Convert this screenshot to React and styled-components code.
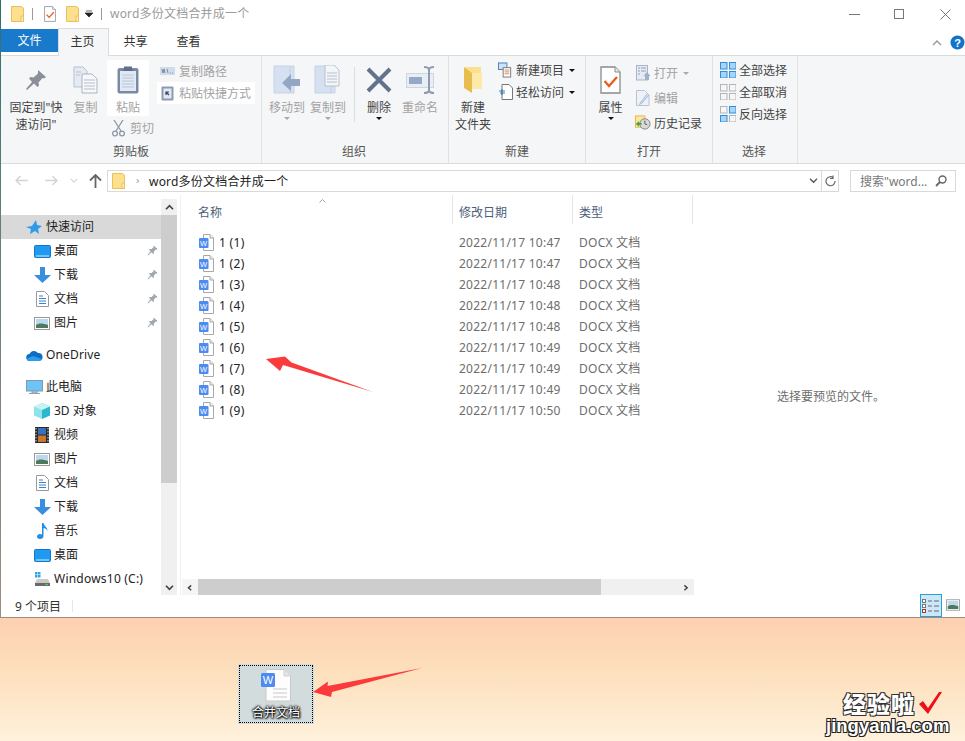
import React from "react";
import styled, { createGlobalStyle } from "styled-components";

const Global = createGlobalStyle`
  html, body { margin: 0; padding: 0; background: #fff; }
  body { font-family: "Noto Sans", "Noto Sans CJK SC", sans-serif; font-size: 12px; color: #222; }
  * { box-sizing: border-box; }
`;

const Page = styled.div`
  position: relative; width: 965px; height: 741px; overflow: hidden;
  display: flex; flex-direction: column;
`;
const Window = styled.div`
  height: 618px; padding-left: 1px; padding-bottom: 1px;
  background: linear-gradient(#2f6f70, #5e7f7c 35%, #a08c80);
  display: flex; flex-direction: column;
`;
const Inner = styled.div`flex: 1; background: #fff; display: flex; flex-direction: column; min-height: 0;`;

const TitleBar = styled.div`height: 28px; display: flex; align-items: center; padding-left: 10px; flex: none;`;
const Bar = styled.span`width: 1px; height: 12px; background: #9a9a9a; margin: ${p => p.$m};`;
const TitleText = styled.span`color: #9b9b9b; line-height: 28px; margin-left: 8px; white-space: nowrap; letter-spacing: .2px;`;
const Spacer = styled.span`width: ${p => p.$w}px; flex: none;`;
const WinControls = styled.div`margin-left: auto; display: flex; align-items: center; padding-right: 14px;`;
const WinBtn = styled.svg`margin-left: ${p => p.$ml || 0}px; display: block;`;

const TabRow = styled.div`height: 28px; display: flex; flex: none; position: relative; border-bottom: 1px solid #dadbdc; align-items: flex-end;`;
const FileTab = styled.div`width: 57px; height: 23px; margin-bottom: 3px; background: #1979ca; color: #fff; text-align: center; line-height: 23px;`;
const ActiveTab = styled.div`width: 51px; height: 28px; margin-bottom: -1px; background: #f5f6f7; border: 1px solid #dadbdc; border-bottom: 0; text-align: center; line-height: 25px; color: #333; padding-right: 2px;`;
const Tab = styled.div`width: ${p => p.$w}px; height: 24px; line-height: 25px; text-align: center; color: #333; margin-bottom: 2px; padding-right: 2px;`;
const TabRight = styled.div`margin-left: auto; height: 27px; display: flex; align-items: center; gap: 8px; padding-top: 2px;`;

const Ribbon = styled.div`height: 108px; flex: none; background: #f5f6f7; border-bottom: 1px solid #dadbdc; display: flex;`;
const Group = styled.div`
  width: ${p => p.$w}px; height: 107px; border-right: 1px solid #e0e1e2; flex: none;
  display: flex; flex-direction: column;
`;
const GroupBody = styled.div`flex: 1; display: flex; padding: 4px 0 0 ${p => p.$pl}px; min-height: 0;`;
const GroupLabel = styled.div`height: 22px; line-height: 21px; text-align: center; color: #555; padding-right: ${p => p.$pr || 0}px;`;

const BigBtn = styled.div`
  width: ${p => p.$w}px; flex: none; display: flex; flex-direction: column; align-items: center;
  color: ${p => (p.$off ? "#a3a3a3" : "#444")}; line-height: 17px; text-align: center; white-space: nowrap;
  height: ${p => (p.$box ? "56px" : "auto")}; background: ${p => (p.$box ? "#fff" : "transparent")};
`;
const BigIcon = styled.div`height: 39px; display: flex; align-items: center; justify-content: center;`;
const Caret = styled.span`
  width: 0; height: 0; margin-top: 1px; margin-left: ${p => p.$ml || 0}px;
  border: 3px solid transparent; border-bottom: 0; border-top: 3px solid ${p => p.$c || "#111"};
`;
const PasteCol = styled.div`width: 50px; flex: none; display: flex; flex-direction: column;`;
const CutRow = styled.div`display: flex; align-items: center; gap: 5px; padding: 3px 0 0 5px; color: #a3a3a3;`;
const Stack = styled.div`display: flex; flex-direction: column; margin-left: ${p => p.$ml || 0}px; margin-top: ${p => p.$mt || 0}px;`;
const Small = styled.div`
  height: ${p => p.$h || 22}px; display: flex; align-items: center; gap: ${p => p.$gap || 4}px;
  padding: 0 4px 0 ${p => p.$pl || 0}px; white-space: nowrap;
  color: ${p => (p.$off ? "#a3a3a3" : "#444")};
  background: ${p => (p.$hl ? "#fff" : "transparent")};
`;
const IconSlot = styled.span`width: ${p => p.$w}px; display: flex; justify-content: center; flex: none;`;
const Sep = styled.div`width: 1px; height: 55px; background: #dcdddf; margin: 7px 4px 0 6px; flex: none;`;

const AddressRow = styled.div`height: 31px; flex: none; display: flex; align-items: center; padding-top: 2px;`;
const NavButtons = styled.div`width: 106px; flex: none; display: flex; align-items: center; padding-left: 13px;`;
const NavSlot = styled.span`width: ${p => p.$w}px; display: flex; justify-content: center; flex: none;`;
const Field = styled.div`
  height: 22px; border: 1px solid #d9d9d9; display: flex; align-items: center; flex: none;
  width: ${p => p.$w}px; margin-left: ${p => p.$ml || 0}px;
`;
const Crumb = styled.span`margin-left: 8px; color: #222; white-space: nowrap; letter-spacing: .2px;`;
const FieldEnd = styled.div`margin-left: auto; display: flex; align-items: center; height: 100%; padding-right: ${p => p.$pr || 0}px;`;
const RefreshBox = styled.span`height: 100%; width: 17px; margin-left: 3px; border-left: 1px solid #d9d9d9; display: flex; align-items: center; justify-content: center;`;
const SearchText = styled.span`margin-left: 9px; color: #777; white-space: nowrap;`;

const Content = styled.div`flex: 1; display: flex; min-height: 0;`;
const NavPane = styled.div`width: 160px; flex: none; padding-top: 20px; overflow: hidden;`;
const NavRow = styled.div`
  height: 24px; display: flex; align-items: center; position: relative;
  padding-left: ${p => p.$indent}px; margin-top: ${p => p.$mt || 0}px;
  background: ${p => (p.$sel ? "#d9d9d9" : "transparent")}; color: #222; white-space: nowrap;
`;
const NavIcon = styled.span`width: 18px; height: 18px; display: flex; align-items: center; justify-content: center; margin-right: 3px; flex: none;`;
const NavText = styled.span`position: relative; top: -1px; letter-spacing: ${p => p.$ls || 0}px;`;
const Pin = styled.span`position: absolute; left: 146px; top: 6px; display: flex;`;

const VScroll = styled.div`width: 16px; flex: none; background: #f0f0f0; display: flex; flex-direction: column; margin-top: 4px;`;
const VArrow = styled.div`height: 16px; display: flex; align-items: center; justify-content: center; flex: none;`;
const VThumb = styled.div`height: 268px; background: #cdcdcd; flex: none;`;
const VSpace = styled.div`flex: 1;`;
const Gutter = styled.div`width: 4px; border-right: 1px solid #f0f0f0; flex: none;`;

const ListPane = styled.div`width: 513px; flex: none; display: flex; flex-direction: column; position: relative;`;
const ListHead = styled.div`height: 37px; display: grid; grid-template-columns: 272px 120px 120px; flex: none;`;
const HeadCell = styled.div`
  height: 29px; padding: 5px 0 0 ${p => p.$pl}px; line-height: 26px; color: #4c607a;
  border-right: 1px solid #e5e5e5;
`;
const SortUp = styled.span`position: absolute; left: 137px; top: 3px; display: flex;`;
const Files = styled.div`flex: 1;`;
const FileRow = styled.div`height: 21px; display: grid; grid-template-columns: 272px 120px 120px; align-items: center;`;
const NameCell = styled.div`padding-left: 18px; display: flex; align-items: center; gap: 5px; color: #222; letter-spacing: .3px;`;
const MetaCell = styled.div`padding: 0 0 1px 6px; color: #6d6d6d; letter-spacing: .25px;`;
const HScroll = styled.div`height: 16px; margin-left: 1px; background: #f0f0f0; display: flex; flex: none;`;
const HArrow = styled.div`width: 16px; background: ${p => (p.$l ? "#f5f5f5" : "transparent")}; display: flex; align-items: center; justify-content: center; flex: none;`;
const HThumb = styled.div`width: 403px; background: #cdcdcd; flex: none;`;
const HSpace = styled.div`flex: 1;`;
const Preview = styled.div`flex: 1; display: flex; align-items: center; justify-content: center; color: #6d6d6d; padding: 2px 0 0 3px;`;

const Status = styled.div`height: 22px; flex: none; display: flex; align-items: center; padding-left: 14px; position: relative; color: #333;`;
const StatusSep = styled.span`width: 1px; height: 12px; background: #e6e6e6; margin-left: 11px;`;
const ViewBtns = styled.div`margin-left: auto; display: flex; align-items: flex-end; height: 100%; padding-right: 5px; gap: 4px;`;
const DetailsBtn = styled.div`width: 22px; height: 23px; background: #cce8f7; border: 1px solid #26a0da; display: flex; align-items: center; justify-content: center;`;
const ThumbBtn = styled.div`height: 22px; display: flex; align-items: center; padding-bottom: 3px;`;

const Desktop = styled.div`flex: 1; position: relative; background: linear-gradient(#fdd0b1, #fde0bd 45%, #fff1dc);`;
const DeskItem = styled.div`
  position: absolute; left: 239px; top: 47px; width: 74px; height: 58px;
  background: #d3dcdc; border: 1px dotted #000; outline: 1px solid #d3dcdc;
  display: flex; flex-direction: column; align-items: center; padding-top: 3px;
`;
const DeskLabel = styled.div`
  color: #fff; line-height: 16px; margin-top: 3px;
  text-shadow: 0 0 2px #000, 0 0 2px #000, 0 0 3px #000, 1px 1px 2px #000;
`;
const Watermark = styled.div`position: absolute; left: 826px; top: 72px; width: 130px;`;
const WmTop = styled.div`
  display: flex; align-items: center; padding-left: 17px; height: 26px;
  font: 900 23px/26px "Noto Sans CJK SC", sans-serif; color: #fff;
  text-shadow: 1px 1px 0 #333, -1px -1px 0 #333, 1px -1px 0 #333, -1px 1px 0 #333;
  letter-spacing: 1px; white-space: nowrap;
`;
const WmBottom = styled.div`
  font: 700 18.5px/20px "Liberation Sans", sans-serif; color: #fff; white-space: nowrap;
  text-shadow: 1px 1px 0 #222, -1px -1px 0 #222, 1px -1px 0 #222, -1px 1px 0 #222, 0 1px 0 #222, 0 -1px 0 #222;
`;
const WmCheck = styled.svg`margin-left: 3px; flex: none;`;
const Overlay = styled.svg`position: absolute; left: 0; top: 0; pointer-events: none;`;

/* ---------- icons ---------- */
const Folder = ({ w = 13, h = 16 }) => (
  <svg width={w} height={h} viewBox="0 0 13 16">
    <path d="M.5.5h9.5l2.5 1.5v13.5H.5z" fill="#fde08d" stroke="#e8c15f" />
    <path d="M10 10h2.5v5.5H10z" fill="#fdeeb8" stroke="#e8c15f" />
  </svg>
);
const CheckDoc = ({ w = 12, h = 16 }) => (
  <svg width={w} height={h} viewBox="0 0 21 28">
    <path d="M1 1h14l5 5v21H1z" fill="#fff" stroke="#8a8a8a" strokeWidth="1.3" />
    <path d="M15 1v5h5" fill="#e8e8e8" stroke="#8a8a8a" />
    <path d="M4.5 15l4.5 5 8-9" fill="none" stroke="#f0561d" strokeWidth="2.2" />
  </svg>
);
const PinIcon = ({ s = 22, c = "#8a9099" }) => (
  <svg width={s} height={s} viewBox="0 0 22 22">
    <path d="M13 1l8 7-2 1.500-1.500-.5-4 4.500.5 3-1.500 1.500-3.500-3.500L2 21l-1-1 6-7-3-3.500L5.500 8l3 .5L13 4.500z" fill={c} />
  </svg>
);
const CopyIcon = () => (
  <svg width="25" height="28" viewBox="0 0 25 28">
    <path d="M1 1h9l4 4v16H1z" fill="#e4ebf4" stroke="#b7c1cd" />
    <path d="M9 8h10l5 5v14H9z" fill="#f6f8fb" stroke="#aab4c0" />
    <path d="M11 14h11M11 17h11M11 20h11M11 23h11M3 6h5M3 9h4" stroke="#b6bfca" />
  </svg>
);
const PasteIcon = () => (
  <svg width="22" height="29" viewBox="0 0 22 29">
    <rect x=".5" y="3" width="21" height="25.500" rx="2" fill="#7a8ba3" />
    <rect x="3" y="6" width="16" height="20" fill="#e3e9f4" />
    <path d="M5 10h12M5 13h12M5 16h12M5 19h12M5 22h12" stroke="#b9c5d8" />
    <path d="M7 4V1.500h8V4l2 2H5z" fill="#5f7088" />
  </svg>
);
const ScissorsIcon = () => (
  <svg width="13" height="17" viewBox="0 0 13 17" fill="none" stroke="#8d99a8" strokeWidth="1.3">
    <path d="M2 0l7 11M11 0L4 11" />
    <circle cx="3" cy="13.500" r="2.400" />
    <circle cx="10" cy="13.500" r="2.400" />
  </svg>
);
const PathIcon = () => (
  <svg width="15" height="8" viewBox="0 0 15 8">
    <rect width="15" height="8" fill="#cfdcec" />
    <path d="M2 2l1 4 1-4 1 4M7 2l1 4M10 6h.8M12 6h.8" stroke="#667788" strokeWidth=".8" fill="none" />
  </svg>
);
const ShortcutIcon = () => (
  <svg width="13" height="16" viewBox="0 0 13 16">
    <rect x=".5" y="1.500" width="12" height="14" rx="1" fill="#8b9bb0" />
    <rect x="2.500" y="3.500" width="8" height="10" fill="#e3e9f4" />
    <path d="M5 10V7h3M5 7l3 3" stroke="#33445a" strokeWidth="1.200" fill="none" />
  </svg>
);
const MoveIcon = ({ copy }) => (
  <svg width="28" height="29" viewBox="0 0 28 29">
    <path d="M1 1h20v27H1z" fill="#d5e0f0" stroke="#c6d3e6" />
    <path d="M17 2v26" stroke="#c0cde0" />
    {copy ? (
      <g>
        <path d="M11 0h9l5 5v16H11z" fill="#f2f5f9" stroke="#b9c2ce" />
        <path d="M13 8h10M13 11h10M13 14h10M13 17h10" stroke="#b9c2ce" />
      </g>
    ) : (
      <path d="M27 14h-9V9l-9 9 9 8v-5h9z" fill="#93a7c4" />
    )}
  </svg>
);
const DeleteIcon = () => (
  <svg width="26" height="26" viewBox="0 0 26 26">
    <path d="M2 2l22 22M24 2L2 24" stroke="#63738d" strokeWidth="4" />
  </svg>
);
const RenameIcon = () => (
  <svg width="29" height="28" viewBox="0 0 29 28">
    <rect x=".5" y="7.500" width="27" height="14" fill="#e9eef6" stroke="#ccd6e3" />
    <rect x="3" y="11" width="13" height="7" fill="#95a9c4" />
    <path d="M18 1c3 0 4.500 1 5 2 .5-1 2-2 5-2M23 3v22M18 27c3 0 4.500-1 5-2 .5 1 2 2 5 2" stroke="#8d9bae" strokeWidth="2" fill="none" />
  </svg>
);
const NewFolderIcon = () => (
  <svg width="20" height="28" viewBox="0 0 20 28">
    <path d="M2 1h16v22H8z" fill="#fbe08f" />
    <path d="M1 1l8 6v20l-8-5z" fill="#e9bc4f" />
    <path d="M9 7h10v16H9z" fill="#fde9a8" />
  </svg>
);
const NewItemIcon = () => (
  <svg width="16" height="16" viewBox="0 0 16 16">
    <rect x=".5" y=".5" width="9" height="7" fill="#cfe3f5" stroke="#3f80c0" />
    <rect x="5.500" y="5.500" width="8" height="10" fill="#fff" stroke="#777" />
    <path d="M7 8h5M7 10h5M7 12h5" stroke="#d0682f" strokeWidth=".8" />
  </svg>
);
const EasyIcon = () => (
  <svg width="14" height="16" viewBox="0 0 14 16">
    <path d="M3 .5h7l3.500 3.500v11.500H3z" fill="#fff" stroke="#777" />
    <path d="M0 7h6M1 9h5M3 5v6" stroke="#2a72b8" strokeWidth=".9" fill="none" />
  </svg>
);
const OpenIcon = () => (
  <svg width="15" height="16" viewBox="0 0 15 16">
    <rect x=".5" y=".5" width="11" height="14.500" fill="#e4ebf4" stroke="#a9b5c4" />
    <path d="M2 3h2M5 3h5M2 6h2M5 6h5M2 9h2" stroke="#92a1b5" />
    <path d="M11 7l3.500 4H13v4h-4v-4H7.500z" fill="#9fb0c7" />
  </svg>
);
const EditIcon = () => (
  <svg width="14" height="16" viewBox="0 0 14 16">
    <path d="M.5.500h8l4.500 4.500v10.500H.5z" fill="#eef2f8" stroke="#b9c4d3" />
    <path d="M11 4l-6 8-1.500 2.500L6 13l7-8" fill="#cddcf0" stroke="#a9c0dc" />
  </svg>
);
const HistoryIcon = () => (
  <svg width="17" height="15" viewBox="0 0 17 15">
    <rect x=".5" y=".5" width="10" height="12" fill="#fce79f" stroke="#e0b94c" />
    <circle cx="10.500" cy="9" r="5.500" fill="#d9d9d9" stroke="#808080" />
    <path d="M10.500 5.500V9l2.500 1" stroke="#555" fill="none" />
    <path d="M1 9l3-3v2h3v2H4v2z" fill="#3da63a" />
  </svg>
);
const Grid4 = ({ on = [true, true, true, true] }) => (
  <svg width="16" height="16" viewBox="0 0 16 16">
    {[[0, 0], [9, 0], [0, 9], [9, 9]].map(([x, y], i) => (
      <rect key={i} x={x + 0.5} y={y + 0.5} width="6.500" height="6.500"
        fill={on[i] ? "#a8d4f8" : "#f5f6f7"} stroke={on[i] ? "#2f8fdc" : "#b5b5b5"} />
    ))}
  </svg>
);
const Arrow = ({ flip, c }) => (
  <svg width="13" height="11" viewBox="0 0 14 12" style={{ transform: flip ? "scaleX(-1)" : "none" }}>
    <path d="M6 1L1 6l5 5M1 6h13" fill="none" stroke={c} strokeWidth="1.600" />
  </svg>
);
const Chevron = ({ d = "M1 6l4-4 4 4", c = "#555", w = 10, h = 8, sw = 1.500 }) => (
  <svg width={w} height={h} viewBox="0 0 10 8"><path d={d} fill="none" stroke={c} strokeWidth={sw} /></svg>
);
const WordFile = () => (
  <svg width="15" height="17" viewBox="0 0 15 17">
    <path d="M4.500.5h6.500l3.500 3.500v12.500H4.500z" fill="#fff" stroke="#a8a8a8" />
    <path d="M11 .5V4h3.500" fill="#eee" stroke="#a8a8a8" />
    <rect x="0" y="4" width="9.500" height="10" rx="1" fill="#4d8bf0" />
    <text x="4.700" y="11.500" fontSize="7.500" fontFamily="Liberation Sans" fill="#fff" textAnchor="middle">W</text>
  </svg>
);
const Monitor = ({ c = "#1e9bf0" }) => (
  <svg width="17" height="13" viewBox="0 0 17 13">
    <rect x=".5" y=".5" width="16" height="12" rx="1" fill={c} stroke="#1279c8" />
    <path d="M2 11h13" stroke="#cfeaff" />
  </svg>
);
const Down = () => (
  <svg width="17" height="16" viewBox="0 0 17 16"><path d="M6 0h5v8h6l-8.500 8L0 8h6z" fill="#3a8ede" /></svg>
);
const Doc = () => (
  <svg width="13" height="16" viewBox="0 0 13 16">
    <path d="M.5.500h8l4 4v11H.5z" fill="#fff" stroke="#9a9a9a" />
    <path d="M3 5h4M3 7.500h7M3 10h7M3 12.500h7" stroke="#3b86c8" />
  </svg>
);
const Picture = ({ w = 16, h = 13 }) => (
  <svg width={w} height={h} viewBox="0 0 16 13">
    <rect x=".5" y=".5" width="15" height="12" fill="#fff" stroke="#9a9a9a" />
    <rect x="2" y="2" width="12" height="9" fill="#bcd8ee" />
    <path d="M2 8c3-2 6-2 12 0v3H2z" fill="#4e7a5c" />
  </svg>
);
const Star = () => (
  <svg width="16" height="15" viewBox="0 0 16 15">
    <path d="M10 0l1 5 5 1-4 3 1 5-4-3-5 3 1-5-5-2 6-1z" fill="#2f9ae8" />
  </svg>
);
const Cloud = () => (
  <svg width="17" height="11" viewBox="0 0 17 11">
    <path d="M4 11a3.500 3.500 0 0 1-.5-7A5 5 0 0 1 12 3a4 4 0 0 1 1 8z" fill="#0f6cc4" />
    <path d="M4 11c-2 0-3-1-3-2.500L7 6l9 3c-.5 1.200-1.500 2-3 2z" fill="#2c9de8" />
  </svg>
);
const PC = () => (
  <svg width="17" height="15" viewBox="0 0 17 15">
    <rect x=".5" y=".5" width="16" height="10.500" fill="#6fc4f6" stroke="#7f9bb3" />
    <path d="M6 11h5v2H6zM3 13.500h11" stroke="#8aa0b3" fill="#b9d0e0" />
  </svg>
);
const Cube = () => (
  <svg width="16" height="16" viewBox="0 0 16 16">
    <path d="M8 0l8 3.500v9L8 16z" fill="#2fb6cf" />
    <path d="M8 0L0 3.500v9L8 16z" fill="#8fe3ea" />
    <path d="M0 3.500L8 7l8-3.500L8 0z" fill="#c7f3f3" />
  </svg>
);
const Film = () => (
  <svg width="14" height="16" viewBox="0 0 14 16">
    <rect width="14" height="16" fill="#2a2a2a" />
    <rect x="3" y="1" width="8" height="6.500" fill="#3573c0" />
    <rect x="3" y="8.500" width="8" height="6.500" fill="#c9762f" />
    <path d="M1 1v14M13 1v14" stroke="#ddd" strokeDasharray="1.500 1.500" />
  </svg>
);
const Music = () => (
  <svg width="11" height="16" viewBox="0 0 11 16">
    <path d="M5 0h1.500c.5 3 4 4 4 8-1-2-2.500-3-4-3v8c0 2-1.500 3-3.500 3S0 15 0 13.500 1.500 11 3 11c.8 0 1.500.2 2 .5z" fill="#1f8fe8" />
  </svg>
);
const Drive = () => (
  <svg width="15" height="14" viewBox="0 0 15 14">
    <rect x="0" y="0" width="2.500" height="2.500" fill="#2fa4e7" /><rect x="3" y="0" width="2.500" height="2.500" fill="#2fa4e7" />
    <rect x="0" y="3" width="2.500" height="2.500" fill="#2fa4e7" /><rect x="3" y="3" width="2.500" height="2.500" fill="#2fa4e7" />
    <path d="M2 7h11l2 4v3H0v-3z" fill="#c9c9c9" />
    <rect x="0" y="11" width="15" height="3" fill="#6a6a6a" /><rect x="10" y="12" width="3" height="1" fill="#55d040" />
  </svg>
);
const BigWord = () => (
  <svg width="30" height="33" viewBox="0 0 30 33">
    <path d="M5 .5h18l6.500 6.500v25H5z" fill="#fdfdfd" stroke="#c8c8c8" />
    <path d="M23 .5V7h6.500" fill="#e5e5e5" stroke="#d0d0d0" />
    <path d="M12 20h14M12 24h14M12 28h14" stroke="#c9c9c9" />
    <rect x="0" y="4" width="14" height="14" rx="1.500" fill="#4d8bf0" />
    <text x="7" y="15" fontSize="11" fontFamily="Liberation Sans" fill="#fff" textAnchor="middle">W</text>
  </svg>
);

const fileRows = [
  ["1 (1)", "2022/11/17 10:47"], ["1 (2)", "2022/11/17 10:47"], ["1 (3)", "2022/11/17 10:48"],
  ["1 (4)", "2022/11/17 10:48"], ["1 (5)", "2022/11/17 10:48"], ["1 (6)", "2022/11/17 10:49"],
  ["1 (7)", "2022/11/17 10:49"], ["1 (8)", "2022/11/17 10:49"], ["1 (9)", "2022/11/17 10:50"],
];
const navRows = [
  { t: "快速访问", i: <Star />, indent: 24, sel: true },
  { t: "桌面", i: <Monitor />, indent: 32, pin: true },
  { t: "下载", i: <Down />, indent: 32, pin: true },
  { t: "文档", i: <Doc />, indent: 32, pin: true },
  { t: "图片", i: <Picture />, indent: 32, pin: true },
  { t: "OneDrive", i: <Cloud />, indent: 24, mt: 8, ls: 0.15 },
  { t: "此电脑", i: <PC />, indent: 24, mt: 8 },
  { t: "3D 对象", i: <Cube />, indent: 32 },
  { t: "视频", i: <Film />, indent: 32 },
  { t: "图片", i: <Picture />, indent: 32 },
  { t: "文档", i: <Doc />, indent: 32 },
  { t: "下载", i: <Down />, indent: 32 },
  { t: "音乐", i: <Music />, indent: 32 },
  { t: "桌面", i: <Monitor />, indent: 32 },
  { t: "Windows10 (C:)", i: <Drive />, indent: 32, ls: 0.22 },
];

export default function App() {
  return (
    <Page>
      <Global />
      <Window>
        <Inner>
          <TitleBar>
            <Folder />
            <Bar $m="0 11px 0 8px" />
            <CheckDoc />
            <Spacer $w={10} />
            <Folder />
            <Spacer $w={6} />
            <svg width="9" height="9" viewBox="0 0 9 9"><path d="M1 1h6M0 3h8L4 7z" stroke="#222" fill="#222" strokeWidth=".7" /></svg>
            <Bar $m="0 0 0 7px" />
            <TitleText>word多份文档合并成一个</TitleText>
            <WinControls>
              <WinBtn width="11" height="11" viewBox="0 0 11 11"><path d="M0 5.500h11" stroke="#777" /></WinBtn>
              <WinBtn $ml={34} width="10" height="10" viewBox="0 0 10 10"><rect x=".5" y=".5" width="9" height="9" fill="none" stroke="#777" /></WinBtn>
              <WinBtn $ml={36} width="11" height="11" viewBox="0 0 11 11"><path d="M.5.5l10 10M10.500.5l-10 10" stroke="#777" /></WinBtn>
            </WinControls>
          </TitleBar>
          <TabRow>
            <FileTab>文件</FileTab>
            <ActiveTab>主页</ActiveTab>
            <Tab $w={55}>共享</Tab>
            <Tab $w={51}>查看</Tab>
            <TabRight>
              <Chevron c="#9a9a9a" d="M1 6l4-4 4 4" />
              <svg width="15" height="15" viewBox="0 0 15 15">
                <circle cx="7.500" cy="7.500" r="7" fill="#1273c9" />
                <text x="7.500" y="11.500" fontSize="11" fontWeight="700" fontFamily="Liberation Sans" fill="#fff" textAnchor="middle">?</text>
              </svg>
            </TabRight>
          </TabRow>
          <Ribbon>
            <Group $w={261}>
              <GroupBody $pl={7}>
                <BigBtn $w={56}>
                  <BigIcon><PinIcon /></BigIcon>
                  <span>固定到"快</span><span>速访问"</span>
                </BigBtn>
                <BigBtn $w={43} $off>
                  <BigIcon><CopyIcon /></BigIcon>
                  <span>复制</span>
                </BigBtn>
                <PasteCol>
                  <BigBtn $w={42} $off $box>
                    <BigIcon><PasteIcon /></BigIcon>
                    <span>粘贴</span>
                  </BigBtn>
                  <CutRow><ScissorsIcon /><span>剪切</span></CutRow>
                </PasteCol>
                <Stack>
                  <Small $off $pl={3}><IconSlot $w={15}><PathIcon /></IconSlot>复制路径</Small>
                  <Small $off $hl $pl={4} $gap={5}><IconSlot $w={13}><ShortcutIcon /></IconSlot>粘贴快捷方式</Small>
                </Stack>
              </GroupBody>
              <GroupLabel>剪贴板</GroupLabel>
            </Group>
            <Group $w={187}>
              <GroupBody $pl={4}>
                <BigBtn $w={42} $off>
                  <BigIcon><MoveIcon /></BigIcon>
                  <span>移动到</span><Caret $c="#a8a8a8" />
                </BigBtn>
                <BigBtn $w={40} $off>
                  <BigIcon><MoveIcon copy /></BigIcon>
                  <span>复制到</span><Caret $c="#a8a8a8" />
                </BigBtn>
                <Sep />
                <BigBtn $w={40}>
                  <BigIcon><DeleteIcon /></BigIcon>
                  <span>删除</span><Caret />
                </BigBtn>
                <BigBtn $w={42} $off>
                  <BigIcon><RenameIcon /></BigIcon>
                  <span>重命名</span>
                </BigBtn>
              </GroupBody>
              <GroupLabel $pr={2}>组织</GroupLabel>
            </Group>
            <Group $w={137}>
              <GroupBody $pl={4}>
                <BigBtn $w={40}>
                  <BigIcon><NewFolderIcon /></BigIcon>
                  <span>新建</span><span>文件夹</span>
                </BigBtn>
                <Stack $ml={5} $mt={-1}>
                  <Small $gap={3}><IconSlot $w={15}><NewItemIcon /></IconSlot>新建项目<Caret $ml={2} /></Small>
                  <Small $gap={3}><IconSlot $w={15}><EasyIcon /></IconSlot>轻松访问<Caret $ml={2} /></Small>
                </Stack>
              </GroupBody>
              <GroupLabel>新建</GroupLabel>
            </Group>
            <Group $w={127}>
              <GroupBody $pl={6}>
                <BigBtn $w={37}>
                  <BigIcon><CheckDoc w={21} h={28} /></BigIcon>
                  <span>属性</span><Caret />
                </BigBtn>
                <Stack $ml={6}>
                  <Small $off $h={25} $gap={3}><IconSlot $w={16}><OpenIcon /></IconSlot>打开<Caret $c="#a8a8a8" $ml={2} /></Small>
                  <Small $off $h={25} $gap={3}><IconSlot $w={16}><EditIcon /></IconSlot>编辑</Small>
                  <Small $h={25} $gap={3}><IconSlot $w={16}><HistoryIcon /></IconSlot>历史记录</Small>
                </Stack>
              </GroupBody>
              <GroupLabel>打开</GroupLabel>
            </Group>
            <Group $w={85}>
              <GroupBody $pl={7}>
                <Stack $mt={-1}>
                  <Small $gap={3}><Grid4 />全部选择</Small>
                  <Small $gap={3}><Grid4 on={[false, false, false, false]} />全部取消</Small>
                  <Small $gap={3}><Grid4 on={[false, true, true, false]} />反向选择</Small>
                </Stack>
              </GroupBody>
              <GroupLabel $pr={2}>选择</GroupLabel>
            </Group>
          </Ribbon>
          <AddressRow>
            <NavButtons>
              <NavSlot $w={14}><Arrow c="#d4d4d4" /></NavSlot>
              <Spacer $w={16} />
              <NavSlot $w={14}><Arrow flip c="#d4d4d4" /></NavSlot>
              <Spacer $w={10} />
              <NavSlot $w={12}><Chevron w={8} h={7} c="#d4d4d4" d="M1 2l4 4 4-4" /></NavSlot>
              <Spacer $w={8} />
              <NavSlot $w={14}>
                <svg width="13" height="14" viewBox="0 0 13 14"><path d="M1 6.500l5.500-5.500 5.500 5.500M6.500 1v13" fill="none" stroke="#666" strokeWidth="1.800" /></svg>
              </NavSlot>
            </NavButtons>
            <Field $w={732}>
              <Spacer $w={4} />
              <Folder />
              <Spacer $w={10} />
              <Chevron w={6} h={8} c="#777" d="M3 1l3 3-3 3" />
              <Crumb>word多份文档合并成一个</Crumb>
              <FieldEnd>
                <Chevron w={9} h={7} c="#555" d="M1 2l4 4 4-4" />
                <RefreshBox>
                  <svg width="11" height="12" viewBox="0 0 11 12"><path d="M8 2.500A4.500 4.500 0 1 0 10 6M8 .5v3h-3" fill="none" stroke="#666" strokeWidth="1.200" /></svg>
                </RefreshBox>
              </FieldEnd>
            </Field>
            <Field $w={106} $ml={11}>
              <SearchText>搜索"word...</SearchText>
              <FieldEnd $pr={8}>
                <svg width="12" height="12" viewBox="0 0 12 12"><circle cx="7.500" cy="4.500" r="3.500" fill="none" stroke="#666" strokeWidth="1.400" /><path d="M5 7l-4 4" stroke="#666" strokeWidth="1.800" /></svg>
              </FieldEnd>
            </Field>
          </AddressRow>
          <Content>
            <NavPane>
              {navRows.map((r, i) => (
                <NavRow key={i} $indent={r.indent} $sel={r.sel} $mt={r.mt}>
                  <NavIcon>{r.i}</NavIcon><NavText $ls={r.ls}>{r.t}</NavText>
                  {r.pin && <Pin><PinIcon s={11} c="#9fa6ae" /></Pin>}
                </NavRow>
              ))}
            </NavPane>
            <VScroll>
              <VArrow><Chevron w={9} h={7} c="#444" sw={2} d="M1 6l4-4 4 4" /></VArrow>
              <VThumb />
              <VSpace />
              <VArrow><Chevron w={9} h={7} c="#444" sw={2} d="M1 2l4 4 4-4" /></VArrow>
            </VScroll>
            <Gutter />
            <ListPane>
              <ListHead>
                <HeadCell $pl={17}>名称</HeadCell>
                <HeadCell $pl={6}>修改日期</HeadCell>
                <HeadCell $pl={6}>类型</HeadCell>
              </ListHead>
              <SortUp><Chevron w={9} h={6} c="#888" sw={1} d="M1 6l4-4 4 4" /></SortUp>
              <Files>
                {fileRows.map(([n, d]) => (
                  <FileRow key={n}>
                    <NameCell><WordFile />{n}</NameCell>
                    <MetaCell>{d}</MetaCell>
                    <MetaCell>DOCX 文档</MetaCell>
                  </FileRow>
                ))}
              </Files>
              <HScroll>
                <HArrow $l><Chevron w={7} h={9} c="#444" sw={2} d="M6 1L2 4.500 6 8" /></HArrow>
                <HThumb />
                <HSpace />
                <HArrow><Chevron w={7} h={9} c="#444" sw={2} d="M2 1l4 3.500L2 8" /></HArrow>
              </HScroll>
            </ListPane>
            <Preview>选择要预览的文件。</Preview>
          </Content>
          <Status>
            9 个项目<StatusSep />
            <ViewBtns>
              <DetailsBtn>
                <svg width="18" height="14" viewBox="0 0 18 14">
                  <rect x=".5" y=".5" width="3" height="3" fill="#fff" stroke="#777" />
                  <rect x=".5" y="5.500" width="3" height="3" fill="#fff" stroke="#777" />
                  <rect x=".5" y="10.500" width="3" height="3" fill="#fff" stroke="#a33" />
                  <path d="M6 2h4M12 2h5M6 7h4M12 7h5M6 12h4M12 12h5" stroke="#667" />
                </svg>
              </DetailsBtn>
              <ThumbBtn><Picture w={14} h={12} /></ThumbBtn>
            </ViewBtns>
          </Status>
        </Inner>
      </Window>
      <Desktop>
        <DeskItem>
          <BigWord />
          <DeskLabel>合并文档</DeskLabel>
        </DeskItem>
        <Watermark>
          <WmTop>
            经验啦
            <WmCheck width="24" height="24" viewBox="0 0 24 24">
              <path d="M1 13l4-3 5 7L21 1h3L10 23z" fill="#f00f16" />
            </WmCheck>
          </WmTop>
          <WmBottom>jingyanla.com</WmBottom>
        </Watermark>
      </Desktop>
      <Overlay width="965" height="741" viewBox="0 0 965 741">
        <path d="M266 359L285 356.500 291.500 362.500 373 392 283 365 280 371z" fill="#fb3b3b" />
        <path d="M313 692L328 681.500 327.500 686 422 668 332 692 331 697z" fill="#fb3b3b" />
      </Overlay>
    </Page>
  );
}
